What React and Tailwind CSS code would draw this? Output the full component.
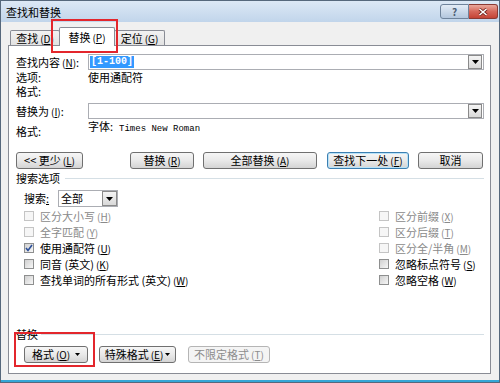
import { useState } from 'react';

const Key = ({ k }) => (
  <span className="text-[10px] ml-[2px]">
    (<span className="underline">{k}</span>)
  </span>
);

const Drop = ({ className = '' }) => (
  <div className={`w-[14px] h-[14px] border border-[#8a8a8a] bg-gradient-to-b from-[#f4f4f4] to-[#d9d9d9] flex items-center justify-center ${className}`}>
    <svg width="7" height="4" viewBox="0 0 7 4">
      <path d="M0 0h7L3.5 4z" fill="#000" />
    </svg>
  </div>
);

const Arrow = () => (
  <svg width="5" height="3" viewBox="0 0 5 3">
    <path d="M0 0h5L2.5 3z" fill="#000" />
  </svg>
);

const Btn = ({ className = '', focus, disabled, children }) => (
  <div
    className={`h-[17px] flex items-center justify-center rounded-[3px] border ${
      focus
        ? 'border-[#3c7fb1] shadow-[inset_0_0_0_1px_#b7e2f8]'
        : disabled
        ? 'border-[#b5b5b5]'
        : 'border-[#707070]'
    } ${
      disabled
        ? 'bg-[#f4f4f4] text-[#8d8d8d]'
        : 'bg-gradient-to-b from-[#f6f6f6] via-[#e9e9e9] to-[#d4d4d4]'
    } ${className}`}
  >
    {children}
  </div>
);

const Check = ({ label, k, disabled, checked }) => (
  <div className={`h-[16px] flex items-center gap-[6px] ${disabled ? 'text-[#8a8a8a]' : 'text-black'}`}>
    <div
      className={`w-[10px] h-[10px] border flex items-center justify-center ${
        disabled
          ? 'border-[#c4c4c4] bg-[#f6f6f6]'
          : 'border-[#8e8f8f] bg-gradient-to-br from-[#d0d0d0] to-[#f7f7f7]'
      }`}
    >
      {checked && (
        <svg width="8" height="8" viewBox="0 0 8 8">
          <path d="M1 4l2 2.5L7 1" stroke="#2c4f98" strokeWidth="1.6" fill="none" />
        </svg>
      )}
    </div>
    <span>
      {label}
      <Key k={k} />
    </span>
  </div>
);

const Tab = ({ active, className = '', children }) => (
  <div
    className={`${
      active
        ? 'h-[19px] -mb-[1px] bg-white relative z-10'
        : 'h-[15px] bg-gradient-to-b from-[#f2f2f2] to-[#e2e2e2]'
    } flex items-center justify-center border border-b-0 border-[#898c95] rounded-t-[2px] ${className}`}
  >
    {children}
  </div>
);

export default function App() {
  const [tab] = useState('replace');

  return (
    <div className="w-[500px] h-[383px] relative flex flex-col bg-[#f0f0f0] border border-[#56687c] text-[11px] leading-[13px] text-black font-['Noto_Sans_CJK_SC',sans-serif] overflow-hidden">
      {/* title bar */}
      <div className="h-[21px] shrink-0 flex items-center justify-between pl-[5px] pr-[1px] bg-gradient-to-b from-[#dce8f5] to-[#c1d5eb]">
        <span className="text-[11px] mt-[2px]">查找和替换</span>
        <div className="flex self-start mt-[3px]">
          <div className="w-[29px] h-[15px] rounded-l-[3px] border border-[#6f839b] bg-gradient-to-b from-[#e3ecf6] to-[#b3c6dd] flex items-center justify-center text-[10px] font-bold text-[#4c5d73] leading-none">
            ?
          </div>
          <div className="w-[29px] h-[15px] rounded-r-[3px] border border-l-0 border-[#8b3a33] bg-gradient-to-b from-[#e9a89c] via-[#d5675a] to-[#c44335] flex items-center justify-center">
            <svg width="10" height="8" viewBox="0 0 10 8">
              <path d="M1.5 1l7 6M8.5 1l-7 6" stroke="#6b2019" strokeWidth="3" />
              <path d="M1.5 1l7 6M8.5 1l-7 6" stroke="#fff" strokeWidth="1.6" />
            </svg>
          </div>
        </div>
      </div>

      {/* body */}
      <div className="flex-1 flex flex-col pl-[7px] pr-[8px] border-b-2 border-[#35a6d6] pb-[6px]">
        {/* tabs */}
        <div className="h-[23px] shrink-0 flex items-end pl-[2px]">
          <Tab active={tab === 'find'} className="w-[50px]">
            查找<Key k="D" />
          </Tab>
          <Tab active={tab === 'replace'} className="w-[56px] -ml-[1px]">
            替换<Key k="P" />
          </Tab>
          <Tab active={tab === 'goto'} className="w-[51px] -ml-[1px]">
            定位<Key k="G" />
          </Tab>
        </div>

        {/* panel */}
        <div className="flex-1 flex flex-col bg-white border border-[#898c95]">
          <div className="mt-[8px] h-[16px] flex items-center pl-[7px]">
            <span className="w-[72px]">
              查找内容<Key k="N" />:
            </span>
            <div className="w-[396px] h-[16px] flex items-center justify-between border border-[#abadb3] pl-[1px] pr-[1px]">
              <span className="bg-[#3399ff] text-white font-['Liberation_Mono',monospace] font-bold text-[10px] leading-[12px] px-[1px]">
                [1-100]
              </span>
              <Drop className="h-[13px]" />
            </div>
          </div>
          <div className="h-[14px] flex items-center pl-[7px]">
            <span className="w-[72px]">选项:</span>
            <span>使用通配符</span>
          </div>
          <div className="h-[14px] flex items-center pl-[7px]">
            <span>格式:</span>
          </div>
          <div className="mt-[5px] h-[16px] flex items-center pl-[7px]">
            <span className="w-[72px]">
              替换为<Key k="I" />:
            </span>
            <div className="w-[396px] h-[16px] flex items-center justify-end border border-[#abadb3] pr-[1px]">
              <Drop className="h-[13px]" />
            </div>
          </div>
          <div className="h-[20px] flex pl-[7px]">
            <span className="w-[72px] self-end mb-[1px]">格式:</span>
            <span className="mt-[1px]">
              字体:
              <span className="ml-[6px] font-['Liberation_Mono',monospace] text-[9px]">Times New Roman</span>
            </span>
          </div>

          {/* main buttons */}
          <div className="mt-[13px] flex pl-[7px]">
            <Btn className="w-[67px]">
              &lt;&lt; 更少<Key k="L" />
            </Btn>
            <Btn className="w-[64px] ml-[47px]">
              替换<Key k="R" />
            </Btn>
            <Btn className="w-[114px] ml-[9px]">
              全部替换<Key k="A" />
            </Btn>
            <Btn focus className="w-[82px] ml-[10px]">
              查找下一处<Key k="F" />
            </Btn>
            <Btn className="w-[65px] ml-[9px]">取消</Btn>
          </div>

          {/* search options */}
          <div className="mt-[2px] h-[14px] flex items-center pl-[7px] pr-[6px] gap-[5px]">
            <span>搜索选项</span>
            <div className="flex-1 h-px bg-[#d5dfe5]" />
          </div>
          <div className="mt-[5px] h-[17px] flex items-center pl-[15px]">
            <span className="w-[34px]">
              搜索<span className="underline">:</span>
            </span>
            <div className="w-[60px] h-[17px] flex items-center justify-between border border-[#abadb3] pl-[2px]">
              <span>全部</span>
              <Drop className="h-[15px] w-[15px]" />
            </div>
          </div>
          <div className="mt-[1px] flex pl-[15px]">
            <div className="w-[355px] flex flex-col">
              <Check disabled label="区分大小写" k="H" />
              <Check disabled label="全字匹配" k="Y" />
              <Check checked label="使用通配符" k="U" />
              <Check label="同音 (英文)" k="K" />
              <Check label="查找单词的所有形式 (英文)" k="W" />
            </div>
            <div className="flex flex-col">
              <Check disabled label="区分前缀" k="X" />
              <Check disabled label="区分后缀" k="T" />
              <Check disabled label="区分全/半角" k="M" />
              <Check label="忽略标点符号" k="S" />
              <Check label="忽略空格" k="W" />
            </div>
          </div>

          {/* replace section */}
          <div className="mt-auto h-[14px] flex items-center pl-[7px] pr-[6px] gap-[3px]">
            <span>替换</span>
            <div className="flex-1 h-px bg-[#d5dfe5]" />
          </div>
          <div className="mt-[5px] mb-[10px] flex pl-[15px]">
            <Btn className="w-[64px] gap-[5px]">
              <span>
                格式<Key k="O" />
              </span>
              <Arrow />
            </Btn>
            <Btn className="w-[77px] ml-[11px] gap-[2px]">
              <span>
                特殊格式<Key k="E" />
              </span>
              <Arrow />
            </Btn>
            <Btn disabled className="w-[82px] ml-[12px]">
              不限定格式<Key k="T" />
            </Btn>
          </div>
        </div>
      </div>

      {/* red annotation boxes */}
      <div className="absolute left-[50px] top-[18px] w-[67px] h-[34px] border-2 border-[#e3262c] z-20 pointer-events-none" />
      <div className="absolute left-[13px] top-[331px] w-[81px] h-[35px] border-2 border-[#e3262c] z-20 pointer-events-none" />
    </div>
  );
}
